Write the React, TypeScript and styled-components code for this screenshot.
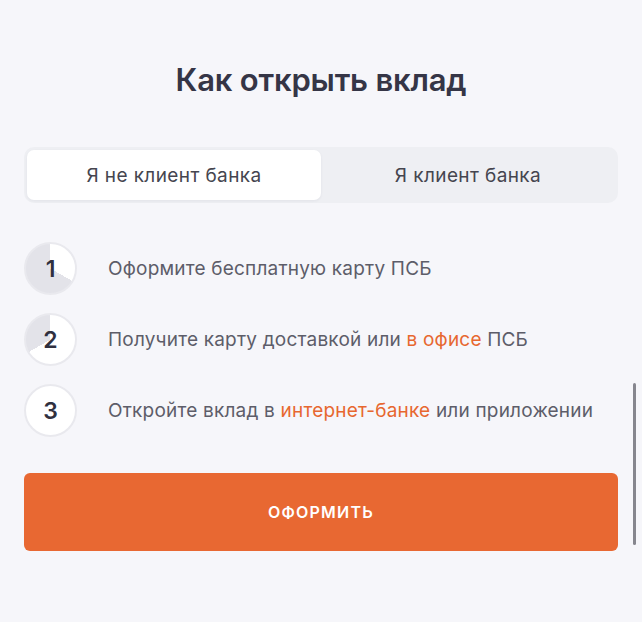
import React, {useState} from 'react'
import styled, {createGlobalStyle} from 'styled-components'

const palette = {
  bg: '#f6f6fa',
  dark: '#353546',
  text: '#5d5d69',
  orange: '#e7672f',
  tabBg: '#eeeff3',
  ring: '#e9e9ee',
  pie: '#e3e3e9',
}

const GlobalStyle = createGlobalStyle`
  html, body {
    margin: 0;
    padding: 0;
    background: ${palette.bg};
    font-family: Inter, "Noto Sans", sans-serif;
  }
`

const Page = styled.div`
  position: relative;
  box-sizing: border-box;
  width: 642px;
  height: 622px;
  padding: 58px 24px 0;
  display: flex;
  flex-direction: column;
`

const Title = styled.h1`
  margin: 0;
  text-align: center;
  font-size: 31px;
  line-height: 44px;
  font-weight: 600;
  color: ${palette.dark};
  letter-spacing: -0.2px;
`

const Tabs = styled.div`
  margin-top: 45px;
  display: grid;
  grid-template-columns: 1fr 1fr;
  padding: 3px;
  background: ${palette.tabBg};
  border-radius: 10px;
`

const Tab = styled.button<{$active?: boolean}>`
  height: 50px;
  border: none;
  border-radius: 7px;
  background: ${(p) => (p.$active ? '#ffffff' : 'transparent')};
  box-shadow: ${(p) => (p.$active ? '0 1px 3px rgba(40, 40, 60, 0.06)' : 'none')};
  font-family: inherit;
  font-size: 19px;
  letter-spacing: 0.4px;
  color: #45454f;
  cursor: pointer;
`

const Steps = styled.ol`
  list-style: none;
  margin: 39px 0 0;
  padding: 0;
  display: flex;
  flex-direction: column;
  gap: 18px;
`

const Step = styled.li`
  display: flex;
  align-items: center;
  gap: 31px;
`

const Circle = styled.div<{$progress: number}>`
  box-sizing: border-box;
  width: 53px;
  height: 53px;
  flex-shrink: 0;
  border-radius: 50%;
  border: 2px solid ${palette.ring};
  background: conic-gradient(
    #ffffff 0deg ${(p) => p.$progress * 360}deg,
    ${palette.pie} ${(p) => p.$progress * 360}deg 360deg
  );
  display: flex;
  align-items: center;
  justify-content: center;
  font-size: 23px;
  font-weight: 600;
  color: #30303f;
`

const StepText = styled.p`
  margin: 0;
  font-size: 19px;
  letter-spacing: 0.2px;
  color: ${palette.text};
`

const Link = styled.a`
  color: ${palette.orange};
  text-decoration: none;
`

const Button = styled.button`
  margin-top: 36px;
  height: 78px;
  border: none;
  border-radius: 6px;
  background: #e86832;
  color: #ffffff;
  font-family: inherit;
  font-size: 16px;
  font-weight: 600;
  letter-spacing: 1.2px;
  cursor: pointer;
`

const ScrollThumb = styled.div`
  position: absolute;
  right: 6px;
  top: 383px;
  width: 3px;
  height: 162px;
  border-radius: 2px;
  background: #86868e;
`

const steps = [
  {num: 1, content: <>Оформите бесплатную карту ПСБ</>},
  {
    num: 2,
    content: (
      <>
        Получите карту доставкой или <Link href='#'>в офисе</Link> ПСБ
      </>
    ),
  },
  {
    num: 3,
    content: (
      <>
        Откройте вклад в <Link href='#'>интернет-банке</Link> или приложении
      </>
    ),
  },
]

const App: React.FC = () => {
  const [tab, setTab] = useState(0)
  return (
    <>
      <GlobalStyle />
      <Page>
        <Title>Как открыть вклад</Title>
        <Tabs>
          <Tab $active={tab === 0} onClick={() => setTab(0)}>
            Я не клиент банка
          </Tab>
          <Tab $active={tab === 1} onClick={() => setTab(1)}>
            Я клиент банка
          </Tab>
        </Tabs>
        <Steps>
          {steps.map((s) => (
            <Step key={s.num}>
              <Circle $progress={s.num / 3}>{s.num}</Circle>
              <StepText>{s.content}</StepText>
            </Step>
          ))}
        </Steps>
        <Button type='button'>ОФОРМИТЬ</Button>
        <ScrollThumb />
      </Page>
    </>
  )
}

export default App
